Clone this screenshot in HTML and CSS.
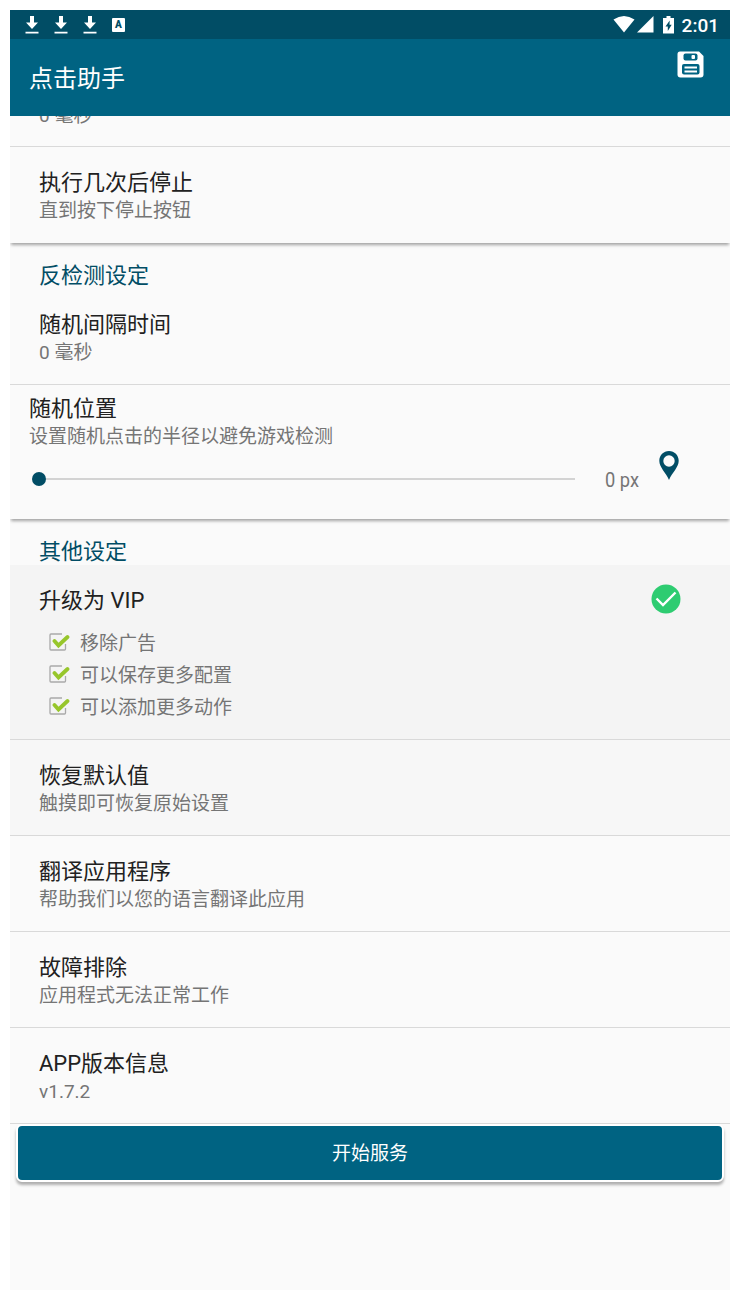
FILE: index.html
```
<!DOCTYPE html>
<html lang="zh-CN">
<head>
    <meta charset="UTF-8" />
    <title>点击助手</title>
    <link rel="stylesheet" href="styles.css">
</head>
<body>

<!-- shared icons -->
<svg class="defs" width="0" height="0">
    <symbol id="download" viewBox="0 0 14 18">
        <path d="M5 0h4v6.500h4L7 13 1 6.500h4zM.5 15.700h13v1.800H.5z" fill="#fff"/>
    </symbol>
    <symbol id="check" viewBox="0 0 22 20">
        <path d="M14 2H3Q2 2 2 3V17Q2 18 3 18H16.500Q17.500 18 17.500 17V12" fill="none" stroke="#a9a9a9" stroke-width="1.300"/>
        <path d="M6.500 9l4 4.500L19.500 5" fill="none" stroke="#97c62b" stroke-width="3.800" stroke-linecap="round"/>
    </symbol>
</svg>

<div class="phone">
    <div class="status-bar">
        <div class="status-left">
            <svg width="14" height="18"><use href="#download"/></svg>
            <svg width="14" height="18"><use href="#download"/></svg>
            <svg width="14" height="18"><use href="#download"/></svg>
            <span class="badge-a">A</span>
        </div>
        <div class="status-right">
            <svg class="wifi" width="22" height="17" viewBox="0 0 22 17"><path d="M.5 3.500Q11-3.500 21.500 3.500L11 16.500z" fill="#fff"/></svg>
            <svg class="signal" width="17" height="17" viewBox="0 0 17 17"><path d="M16.500 0v16.500H0z" fill="#fff"/></svg>
            <svg class="battery" width="11" height="18" viewBox="0 0 11 18"><path d="M3.500 0h4v2H11v15.500H0V2h3.500z" fill="#fff"/><path d="M6.700 4.500L2.500 10.500h2.300v4.500L8.700 8.800H6.500z" fill="#014d65"/></svg>
            <span class="clock">2:01</span>
        </div>
    </div>

    <header class="app-bar">
        <h1>点击助手</h1>
        <svg class="save" width="27" height="27" viewBox="0 0 27 27">
            <path d="M3 .5h19L26.500 5v18.500Q26.500 26.500 23.500 26.500H3.500Q.5 26.500.5 23.500V3Q.5.500 3 .5z" fill="#fff"/>
            <rect x="6.500" y="2.500" width="14" height="7" rx="2" fill="#006382"/>
            <rect x="14.500" y="4" width="3.500" height="4" rx="1" fill="#fff"/>
            <rect x="5" y="13" width="17.500" height="10.500" rx="2" fill="#006382"/>
            <path d="M7.500 16.500h12.500M7.500 20.500h12.500" stroke="#fff" stroke-width="2"/>
        </svg>
    </header>

    <div class="content">
        <section class="card">
            <div class="item item-cut"><div class="sub">0 毫秒</div></div>
            <div class="item">
                <div class="title">执行几次后停止</div>
                <div class="sub">直到按下停止按钮</div>
            </div>
        </section>

        <section class="card">
            <h2>反检测设定</h2>
            <div class="item">
                <div class="title">随机间隔时间</div>
                <div class="sub">0 毫秒</div>
            </div>
            <div class="item-slider">
                <div class="title">随机位置</div>
                <div class="sub">设置随机点击的半径以避免游戏检测</div>
                <div class="slider-row">
                    <div class="slider"><span class="thumb"></span><span class="track"></span></div>
                    <span class="px">0 px</span>
                    <svg class="pin" width="20" height="29" viewBox="0 0 20 29">
                        <path d="M10 0C4.500 0 .3 4.300.3 9.700.3 16.500 7 21.500 10 29c3-7.500 9.700-12.500 9.700-19.300C19.700 4.300 15.500 0 10 0z" fill="#014d65"/>
                        <circle cx="10" cy="10" r="5.700" fill="#fafafa"/>
                    </svg>
                </div>
            </div>
        </section>

        <section class="card-last">
            <h2>其他设定</h2>
            <div class="item vip">
                <div class="vip-head">
                    <div class="title">升级为 VIP</div>
                    <svg width="30" height="30" viewBox="0 0 30 30">
                        <circle cx="15" cy="15" r="14.500" fill="#2ecc71"/>
                        <path d="M5.500 14.500l6.500 6.500L24.500 8.500" fill="none" stroke="#fff" stroke-width="2.400"/>
                    </svg>
                </div>
                <ul>
                    <li><svg width="22" height="20"><use href="#check"/></svg><span>移除广告</span></li>
                    <li><svg width="22" height="20"><use href="#check"/></svg><span>可以保存更多配置</span></li>
                    <li><svg width="22" height="20"><use href="#check"/></svg><span>可以添加更多动作</span></li>
                </ul>
            </div>
            <div class="item reset">
                <div class="title">恢复默认值</div>
                <div class="sub">触摸即可恢复原始设置</div>
            </div>
            <div class="item">
                <div class="title">翻译应用程序</div>
                <div class="sub">帮助我们以您的语言翻译此应用</div>
            </div>
            <div class="item">
                <div class="title">故障排除</div>
                <div class="sub">应用程式无法正常工作</div>
            </div>
            <div class="item">
                <div class="title">APP版本信息</div>
                <div class="sub">v1.7.2</div>
            </div>
        </section>

        <button class="start" type="button">开始服务</button>
    </div>
</div>

</body>
</html>
```
FILE: styles.css
```
* {
    box-sizing: border-box;
}

body {
    margin: 0;
    padding: 10px 5px 10px 10px;
    background-color: #fff;
    font-family: Roboto, "Noto Sans CJK SC", sans-serif;
}

svg {
    display: block;
    flex-shrink: 0;
}

.defs {
    position: absolute;
}

.phone {
    width: 720px;
    height: 1280px;
    background-color: #fafafa;
    overflow: hidden;
}

.status-bar {
    display: flex;
    justify-content: space-between;
    align-items: center;
    height: 29px;
    padding: 0 11px 0 15px;
    background-color: #014d65;
    color: #fff;
}

.status-left, .status-right {
    display: flex;
    align-items: center;
}

.status-left {
    gap: 15px;
}

.badge-a {
    width: 13px;
    height: 14px;
    border-radius: 1px;
    background-color: #fff;
    color: #014d65;
    font-size: 10px;
    font-weight: 900;
    line-height: 14px;
    text-align: center;
}

.signal {
    margin-left: 2px;
}

.battery {
    margin: 0 8px 0 9px;
}

.clock {
    font-size: 19px;
    font-weight: 500;
    line-height: 29px;
    padding-top: 2px;
}

.app-bar {
    display: flex;
    justify-content: space-between;
    height: 77px;
    padding: 0 26px 0 19px;
    background-color: #006382;
    color: #fff;
}

h1 {
    margin: 0;
    padding-top: 2px;
    font-size: 24px;
    font-weight: 400;
    line-height: 77px;
}

.save {
    margin-top: 12px;
}

h2 {
    margin: 0;
    padding: 19px 29px 0;
    height: 46px;
    color: #014d65;
    font-size: 22px;
    font-weight: 400;
    line-height: 28px;
}

.card {
    box-shadow: 0 3px 3px -1px rgba(0,0,0,0.35);
}

.item {
    height: 96px;
    padding: 22px 29px 0;
    border-bottom: 1px solid #d9d9d9;
}

.card .item:last-child {
    border-bottom: none;
}

/* scrolled half way under the app bar */
.item-cut {
    display: flex;
    align-items: flex-end;
    height: 31px;
    padding: 0 29px 16px;
    overflow: hidden;
}

.title {
    color: #212121;
    font-size: 22px;
    line-height: 28px;
}

.sub {
    color: #757575;
    font-size: 19px;
    line-height: 28px;
}

.item-slider {
    height: 134px;
    padding: 10px 19px 0;
}

.slider-row {
    display: flex;
    align-items: flex-start;
}

.slider {
    display: flex;
    align-items: center;
    width: 543px;
    margin: 21px 0 0 3px;
}

.thumb {
    width: 14px;
    height: 14px;
    border-radius: 50%;
    background-color: #014d65;
}

.track {
    flex: 1;
    height: 2px;
    background-color: #d3d3d3;
}

.px {
    width: 34px;
    margin: 17px 20px 0 30px;
    color: #757575;
    font-size: 21px;
    line-height: 24px;
    white-space: nowrap;
    transform: scaleX(0.87);
    transform-origin: left;
}

.vip {
    height: 175px;
    background-color: #f4f4f4;
}

.vip-head {
    display: flex;
    justify-content: space-between;
    height: 39px;
    padding-right: 20px;
}

.vip-head svg {
    margin-top: -3px;
}

ul {
    margin: 0;
    padding: 0 0 0 9px;
    list-style: none;
}

li {
    display: flex;
    align-items: center;
    gap: 10px;
    height: 32px;
    color: #757575;
    font-size: 19px;
}

li span {
    padding-bottom: 2px;
}

.reset {
    background-color: #f7f7f7;
}

.start {
    display: block;
    width: 708px;
    height: 58px;
    margin: 0 6px;
    padding: 0 0 3px;
    border: 2px solid #fff;
    border-radius: 6px;
    background-color: #006382;
    box-shadow: 0 3px 3px rgba(0,0,0,0.3);
    color: #fff;
    font-family: inherit;
    font-size: 19px;
}
```
